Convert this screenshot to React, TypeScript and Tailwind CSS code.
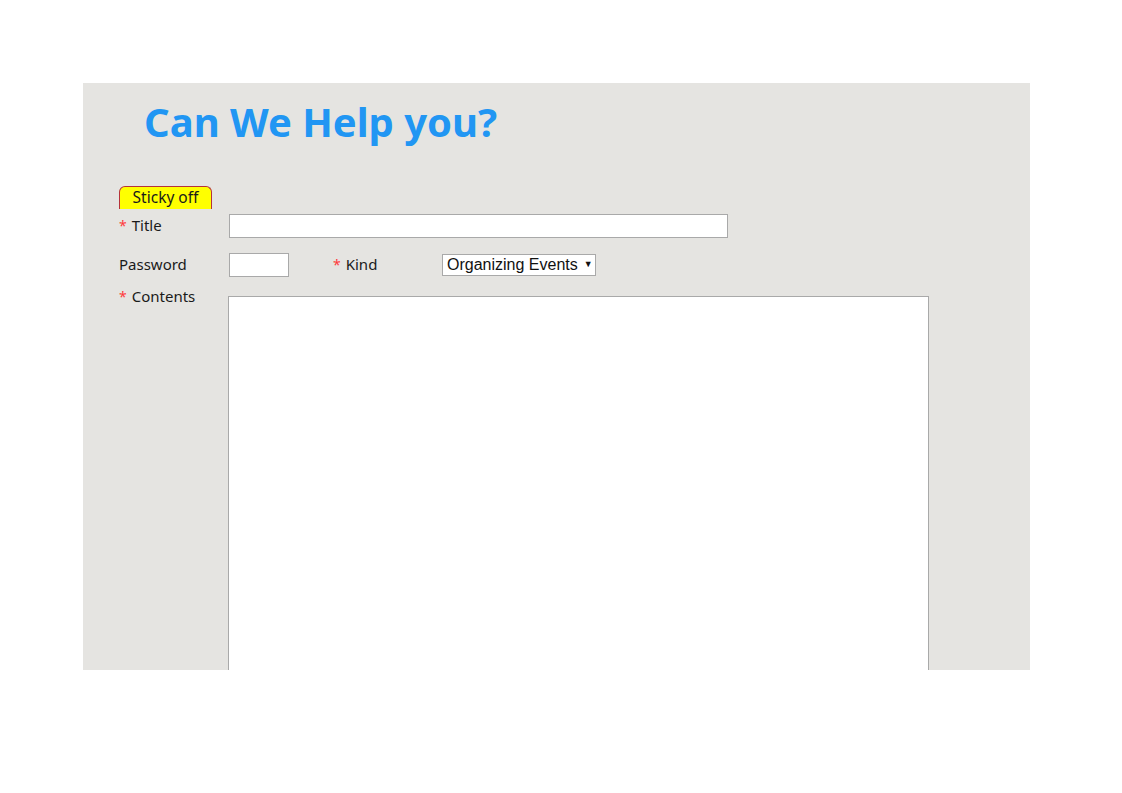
import React from 'react';

const FONT = { fontFamily: '"Noto Sans", "Liberation Sans", sans-serif' };

function Req() {
    return <span className="text-[#ff3b3b] mr-[5px] text-[14px]">*</span>;
}

export default function App() {
    return (
        <div className="min-h-[793px] bg-white pt-[83px] pl-[83px]" style={FONT}>
            <div className="w-[947px] h-[587px] bg-[#e5e4e1] overflow-hidden">
                <h1 className="pl-[61px] pt-[14px] text-[40px] font-bold leading-[50px] text-[#2196f3]">
                    Can We Help you?
                </h1>

                <div className="pl-[36px] pt-[39px] text-[15px] text-[#1a1a1a]">
                    <div className="w-[93px] h-[23px] rounded-t-[6px] border border-b-0 border-[#b5323a] bg-[#ffff00] text-center text-[15.5px] leading-[21px]">
                        Sticky off
                    </div>

                    <div className="flex items-center h-[24px] mt-[5px]">
                        <div className="w-[110px] -mt-[2px]">
                            <Req />Title
                        </div>
                        <input className="w-[499px] h-[24px] bg-white border border-[#a9a9a9]" />
                    </div>

                    <div className="flex items-center h-[24px] mt-[15px]">
                        <div className="w-[110px] -mt-[2px]">Password</div>
                        <input type="password" className="w-[60px] h-[24px] bg-white border border-[#a9a9a9]" />
                        <div className="w-[109px] ml-[44px] -mt-[2px]">
                            <Req />Kind
                        </div>
                        <div
                            className="flex items-center h-[22px] w-[154px] bg-white border border-[#a9a9a9] pl-[4px] text-[16px] text-[#111]"
                            style={{ fontFamily: '"Liberation Sans", Arial, sans-serif' }}
                        >
                            Organizing Events
                            <span className="ml-[6px] text-[9px]">▼</span>
                        </div>
                    </div>

                    <div className="flex mt-[19px]">
                        <div className="w-[109px] -mt-[11px]">
                            <Req />Contents
                        </div>
                        <textarea className="w-[701px] h-[400px] bg-white border border-[#a9a9a9] resize-none" />
                    </div>
                </div>
            </div>
        </div>
    );
}
